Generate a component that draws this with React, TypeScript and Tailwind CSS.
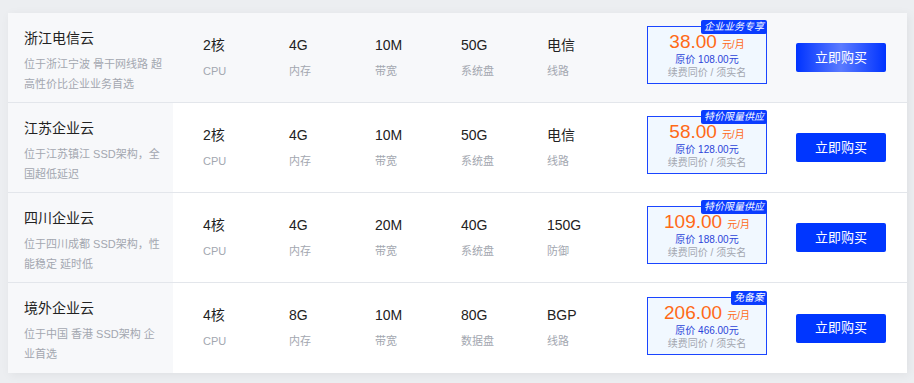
import React from 'react';

const plans = [
  {
    name: '浙江电信云',
    desc: '位于浙江宁波 骨干网线路 超\n高性价比企业业务首选',
    specs: [['2核', 'CPU'], ['4G', '内存'], ['10M', '带宽'], ['50G', '系统盘'], ['电信', '线路']],
    price: '38.00',
    orig: '108.00',
    tag: '企业业务专享',
    active: true
  },
  {
    name: '江苏企业云',
    desc: '位于江苏镇江 SSD架构，全\n国超低延迟',
    specs: [['2核', 'CPU'], ['4G', '内存'], ['10M', '带宽'], ['50G', '系统盘'], ['电信', '线路']],
    price: '58.00',
    orig: '128.00',
    tag: '特价限量供应'
  },
  {
    name: '四川企业云',
    desc: '位于四川成都 SSD架构，性\n能稳定 延时低',
    specs: [['4核', 'CPU'], ['4G', '内存'], ['20M', '带宽'], ['40G', '系统盘'], ['150G', '防御']],
    price: '109.00',
    orig: '188.00',
    tag: '特价限量供应'
  },
  {
    name: '境外企业云',
    desc: '位于中国 香港 SSD架构 企\n业首选',
    specs: [['4核', 'CPU'], ['8G', '内存'], ['10M', '带宽'], ['80G', '数据盘'], ['BGP', '线路']],
    price: '206.00',
    orig: '466.00',
    tag: '免备案'
  }
];

export default function App() {
  return (
    <div className="w-[914px] h-[383px] bg-[#eceef1] pt-[13px] pl-[8px] font-['Liberation_Sans','Noto_Sans_CJK_SC',sans-serif]">
      <div className="w-[899px] bg-white shadow-[2px_2px_10px_rgba(0,0,0,0.06)]">
        {plans.map((p, idx) => (
          <div
            key={idx}
            className={`flex items-stretch h-[90px] ${idx < plans.length - 1 ? 'border-b border-[#e3e6eb]' : ''} ${p.active ? 'bg-[#f7f8fa]' : 'bg-white'}`}
          >
            {/* name */}
            <div className="w-[165px] shrink-0 bg-[#f7f8fa] pl-4 pt-[15px]">
              <h3 className="text-[#222] text-[14px] leading-5">{p.name}</h3>
              <p className="mt-[6px] text-[#a3a7b0] text-[11px] leading-5 whitespace-pre-line">{p.desc}</p>
            </div>

            {/* specs */}
            <div className="flex items-center ml-[30px]">
              {p.specs.map(([v, l], i) => (
                <div key={i} className="w-[86px] flex flex-col gap-[6px]">
                  <span className="text-[#222] text-[14px] leading-5">{v}</span>
                  <span className="text-[#a3a7b0] text-[11px] leading-5">{l}</span>
                </div>
              ))}
            </div>

            {/* price */}
            <div className="flex items-center ml-[14px] pb-[5px]">
              <div className="relative w-[120px] h-[58px] border border-[#1a45ff] bg-[#f1f8ff] flex flex-col items-center pt-[3px]">
                <span className="absolute right-[-1px] top-[-7px] bg-[#0a3cff] text-white text-[10px] leading-[14px] italic px-[3px] rounded-[2px]">
                  {p.tag}
                </span>
                <div className="flex items-baseline">
                  <span className="text-[#ff6a17] text-[19px] leading-[24px]">{p.price}</span>
                  <span className="text-[#ff6a17] text-[10px] ml-[5px]">元/月</span>
                </div>
                <span className="text-[#2b44d9] text-[10px] leading-[13px] mt-[-1px]">原价 {p.orig}元</span>
                <span className="text-[#a3a7b0] text-[10px] leading-[14px]">续费同价 / 须实名</span>
              </div>
            </div>

            {/* button */}
            <div className="flex items-center ml-[29px]">
              <button
                className={`w-[90px] h-[29px] rounded-[2px] text-white text-[13px] ${p.active ? 'bg-[linear-gradient(90deg,#0033ff,#5b7bff_50%,#0033ff)]' : 'bg-[#0036ff]'}`}
              >
                立即购买
              </button>
            </div>
          </div>
        ))}
      </div>
    </div>
  );
}
